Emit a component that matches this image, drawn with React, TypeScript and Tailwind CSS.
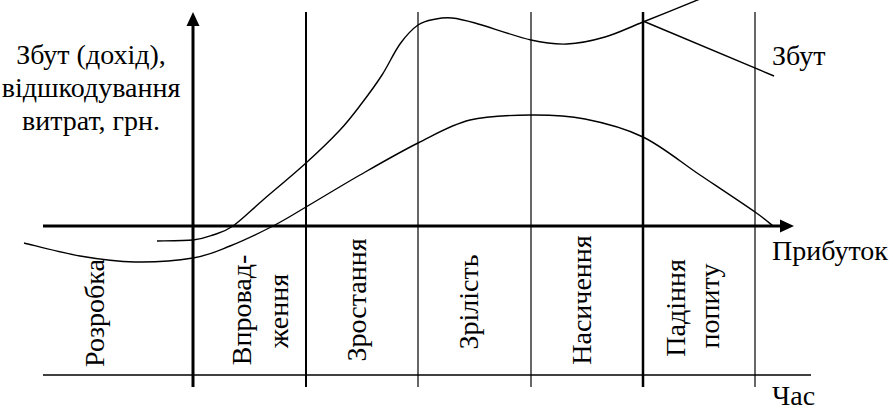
import React from "react";

type Pt = [number, number];

// catmull-rom through the points, as cubic beziers
const smooth = (pts: Pt[]) => {
  let d = `M ${pts[0][0]} ${pts[0][1]}`;
  for (let i = 0; i < pts.length - 1; i++) {
    const p0 = pts[i - 1] || pts[i];
    const p1 = pts[i];
    const p2 = pts[i + 1];
    const p3 = pts[i + 2] || p2;
    const c1x = p1[0] + (p2[0] - p0[0]) / 6;
    const c1y = p1[1] + (p2[1] - p0[1]) / 6;
    const c2x = p2[0] - (p3[0] - p1[0]) / 6;
    const c2y = p2[1] - (p3[1] - p1[1]) / 6;
    d += ` C ${c1x} ${c1y} ${c2x} ${c2y} ${p2[0]} ${p2[1]}`;
  }
  return d;
};

const sales: Pt[] = [
  [157, 241],
  [193, 240],
  [213, 235],
  [233, 226],
  [263, 200],
  [306, 163],
  [340, 130],
  [362, 103],
  [382, 75],
  [400, 44],
  [418, 25],
  [436, 19],
  [452, 18],
  [475, 23],
  [531, 40],
  [567, 44],
  [605, 37],
  [643, 22],
  [700, -1],
];

const profit: Pt[] = [
  [24, 243],
  [80, 256],
  [135, 262],
  [193, 258],
  [230, 246],
  [273, 226],
  [306, 207],
  [360, 175],
  [418, 143],
  [470, 120],
  [531, 115],
  [585, 119],
  [643, 137],
  [700, 175],
  [755, 212],
  [773, 226],
];

const stages = [
  { text: "Розробка", x: 104, y: 313 },
  { text: "Впровад-", x: 251, y: 310 },
  { text: "ження", x: 288, y: 311 },
  { text: "Зростання", x: 366, y: 300 },
  { text: "Зрілість", x: 478, y: 302 },
  { text: "Насичення", x: 591, y: 300 },
  { text: "Падіння", x: 685, y: 308 },
  { text: "попиту", x: 719, y: 306 },
];

const grid = [
  { x: 306, w: 2 },
  { x: 418, w: 1.2 },
  { x: 531, w: 1.2 },
  { x: 643, w: 2.5 },
  { x: 755, w: 1.2 },
];

const txt = "fill-black font-['Liberation_Serif','Times_New_Roman',serif] text-[28px]";

export default function App() {
  return (
    <div className="w-[893px] h-[410px] bg-white overflow-hidden">
      <svg width="893" height="410" viewBox="0 0 893 410" className="block">
        <g stroke="#000" fill="none">
          {grid.map((g) => (
            <line key={g.x} x1={g.x} y1={12} x2={g.x} y2={387} strokeWidth={g.w} />
          ))}
          <line x1={193} y1={22} x2={193} y2={387} strokeWidth={3} />
          <line x1={43} y1={226} x2={783} y2={226} strokeWidth={3} />
          <line x1={43} y1={375} x2={811} y2={375} strokeWidth={1.5} />
          <path d={smooth(sales)} strokeWidth={1.4} />
          <path d={smooth(profit)} strokeWidth={1.4} />
          <line x1={643} y1={21} x2={774} y2={76} strokeWidth={1.4} />
        </g>
        <polygon points="193,12 186.5,26 199.5,26" fill="#000" />
        <polygon points="794,226 780,219.5 780,232.5" fill="#000" />

        <text className={txt} x={91} y={64} textAnchor="middle">Збут (дохід),</text>
        <text className={txt} x={91} y={97} textAnchor="middle">відшкодування</text>
        <text className={txt} x={91} y={130} textAnchor="middle">витрат, грн.</text>
        <text className={txt} x={772} y={65}>Збут</text>
        <text className={txt} x={772} y={260}>Прибуток</text>
        <text className={txt} x={772} y={405}>Час</text>
        {stages.map((s) => (
          <text
            key={s.text}
            className={txt}
            x={0}
            y={0}
            textAnchor="middle"
            transform={`translate(${s.x} ${s.y}) rotate(-90)`}
          >
            {s.text}
          </text>
        ))}
      </svg>
    </div>
  );
}
